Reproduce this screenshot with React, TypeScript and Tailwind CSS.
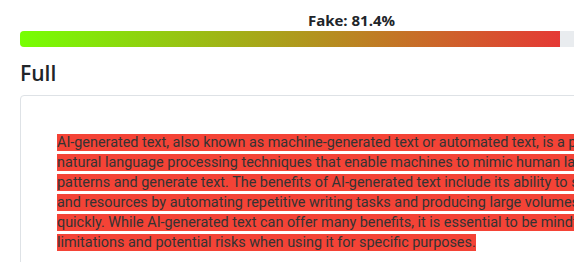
import React from 'react';

const lines = [
  'AI-generated text, also known as machine-generated text or automated text, is a product of advanced',
  'natural language processing techniques that enable machines to mimic human language',
  'patterns and generate text. The benefits of AI-generated text include its ability to save time',
  'and resources by automating repetitive writing tasks and producing large volumes of content',
  'quickly. While AI-generated text can offer many benefits, it is essential to be mindful of its',
  'limitations and potential risks when using it for specific purposes.',
];

const score = 81.4;

const App = () => {
  return (
    <div className="min-h-screen w-full overflow-hidden bg-white">
      <div className="w-[703px] px-5 pt-[9px]">
        {/* Score bar */}
        <div className="text-center font-['Open_Sans',sans-serif] text-[15px] font-bold leading-[22px] text-[#212529]">
          Fake: {score}%
        </div>
        <div className="flex h-4 w-full overflow-hidden rounded-[4px] bg-[#e9ecef]">
          <div
            className="h-full bg-[linear-gradient(to_right,#76ff03,#e53935)]"
            style={{ width: `${score}%` }}
          />
        </div>

        {/* Full text */}
        <h2 className="mt-3 font-['Open_Sans',sans-serif] text-[21px] font-semibold leading-[28px] text-[#212529]">
          Full
        </h2>
        <div className="mt-2 rounded-[4px] border border-[#dee2e6] pt-[37px] pb-9 pl-9 pr-9">
          <p className="whitespace-nowrap font-['Roboto',sans-serif] text-[14.4px] leading-5 text-[#333]">
            {lines.map((line, i) => (
              <React.Fragment key={i}>
                <span className="bg-[#f44336]">{line}</span>
                {i < lines.length - 1 && <br />}
              </React.Fragment>
            ))}
          </p>
        </div>
      </div>
    </div>
  );
};

export default App;
